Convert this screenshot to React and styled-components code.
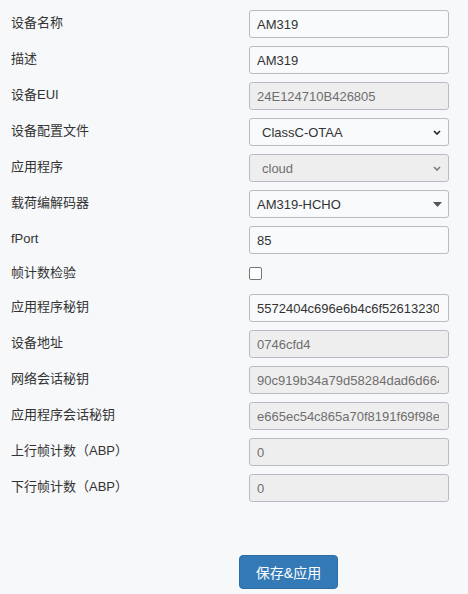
import React from "react";
import styled, { createGlobalStyle } from "styled-components";

const Global = createGlobalStyle`
  html, body { margin: 0; padding: 0; background: #f7f8fa; }
  body { font-family: "Liberation Sans", "Noto Sans CJK SC", sans-serif; color: #333; }
`;

const Page = styled.div`
  padding: 10px 0 0 11px;
  width: 468px;
  height: 594px;
  box-sizing: border-box;
`;

const Form = styled.div`
  display: flex;
  flex-direction: column;
  gap: 8px;
`;

const Row = styled.div`
  display: grid;
  grid-template-columns: 238px 200px;
  align-items: center;
  height: ${(p) => (p.$short ? "24px" : "28px")};
`;

const Label = styled.div`
  font-size: 13px;
  line-height: 16px;
  color: #333;
  padding-bottom: 3px;
  white-space: nowrap;
`;

const Field = styled.input`
  box-sizing: border-box;
  width: 200px;
  height: 28px;
  margin: 0;
  padding: 0 9px 0 7px;
  border: 1px solid #b8bcc2;
  border-radius: 3px;
  font-family: "Liberation Sans", sans-serif;
  font-size: 13px;
  color: ${(p) => (p.disabled ? "#6f6f6f" : "#333")};
  background: ${(p) => (p.disabled ? "#eeeeee" : "#f9fafb")};
  outline: none;
`;

const SelectBox = styled.div`
  box-sizing: border-box;
  width: 200px;
  height: 28px;
  display: flex;
  align-items: center;
  justify-content: space-between;
  padding: 0 ${(p) => (p.$caret ? "6px" : "7px")} 0 ${(p) => (p.$native ? "12px" : "7px")};
  border: 1px solid #b8bcc2;
  border-radius: 3px;
  font-family: "Liberation Sans", sans-serif;
  font-size: 13px;
  color: ${(p) => (p.$disabled ? "#6f6f6f" : "#333")};
  background: ${(p) => (p.$disabled ? "#eeeeee" : "#f9fafb")};
`;

const Check = styled.span`
  display: inline-block;
  width: 11px;
  height: 11px;
  border: 1px solid #767676;
  border-radius: 2px;
  background: #fff;
  margin-top: 3px;
`;

const ButtonBar = styled.div`
  padding: 53px 0 0 228px;
`;

const Button = styled.button`
  width: 99px;
  height: 34px;
  border: 1px solid #2e6da4;
  border-radius: 4px;
  background: #337ab7;
  color: #fff;
  font-family: "Liberation Sans", "Noto Sans CJK SC", sans-serif;
  font-size: 14px;
  padding: 0;
  cursor: pointer;
`;

const Chevron = ({ color }) => (
  <svg width="8" height="5" viewBox="0 0 8 5">
    <path d="M1 1 L4 4 L7 1" fill="none" stroke={color} strokeWidth="1.6" />
  </svg>
);

const Caret = () => (
  <svg width="9" height="5" viewBox="0 0 9 5">
    <path d="M0 0 H9 L4.5 5 Z" fill="#555" />
  </svg>
);

const Select = ({ value, disabled, caret, native }) => (
  <SelectBox $disabled={disabled} $caret={caret} $native={native}>
    <span>{value}</span>
    {caret ? <Caret /> : <Chevron color={disabled ? "#7a7a7a" : "#222"} />}
  </SelectBox>
);

const rows = [
  { label: "设备名称", input: "AM319" },
  { label: "描述", input: "AM319" },
  { label: "设备EUI", input: "24E124710B426805", disabled: true },
  { label: "设备配置文件", select: "ClassC-OTAA", native: true },
  { label: "应用程序", select: "cloud", disabled: true, native: true },
  { label: "载荷编解码器", select: "AM319-HCHO", caret: true },
  { label: "fPort", input: "85" },
  { label: "帧计数检验", check: true },
  { label: "应用程序秘钥", input: "5572404c696e6b4c6f52613230313823" },
  { label: "设备地址", input: "0746cfd4", disabled: true },
  { label: "网络会话秘钥", input: "90c919b34a79d58284dad6d66494fa07", disabled: true },
  { label: "应用程序会话秘钥", input: "e665ec54c865a70f8191f69f98e2a3b0", disabled: true },
  { label: "上行帧计数（ABP）", input: "0", disabled: true },
  { label: "下行帧计数（ABP）", input: "0", disabled: true },
];

export default function App() {
  return (
    <Page>
      <Global />
      <Form>
        {rows.map((r, i) => (
          <Row key={i} $short={r.check}>
            <Label>{r.label}</Label>
            {r.check ? (
              <div><Check /></div>
            ) : r.select ? (
              <Select value={r.select} disabled={r.disabled} caret={r.caret} native={r.native} />
            ) : (
              <Field defaultValue={r.input} disabled={r.disabled} readOnly={!r.disabled} />
            )}
          </Row>
        ))}
      </Form>
      <ButtonBar>
        <Button>保存&amp;应用</Button>
      </ButtonBar>
    </Page>
  );
}
